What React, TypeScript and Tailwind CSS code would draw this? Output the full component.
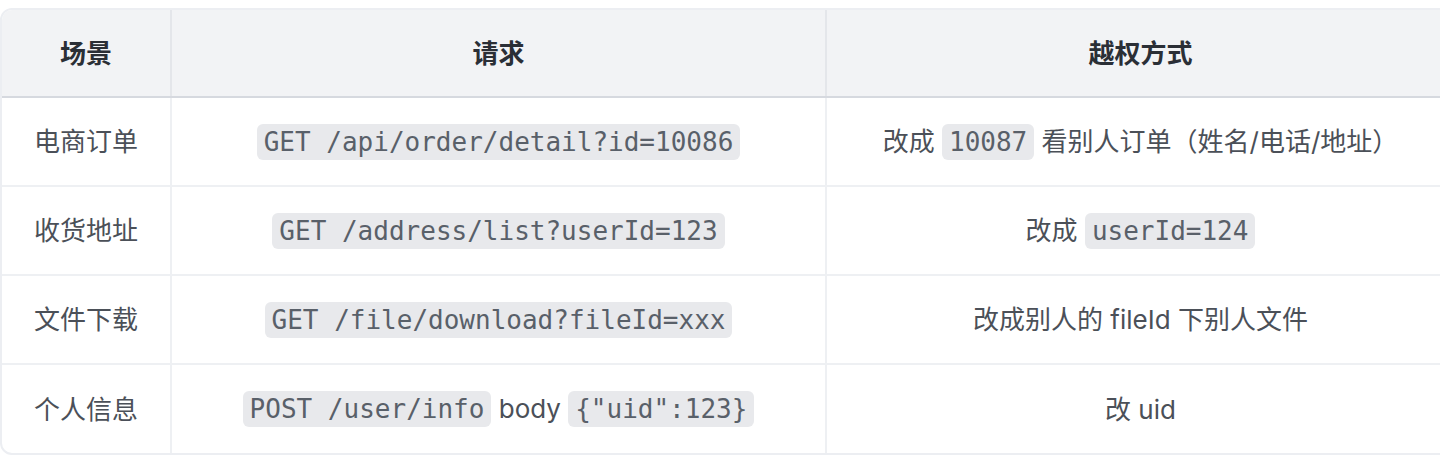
const rows: { scene: string; request: React.ReactNode; method: React.ReactNode }[] = [
  {
    scene: '电商订单',
    request: <Code>GET /api/order/detail?id=10086</Code>,
    method: (
      <>
        改成 <Code>10087</Code> 看别人订单（姓名/电话/地址）
      </>
    ),
  },
  {
    scene: '收货地址',
    request: <Code>GET /address/list?userId=123</Code>,
    method: (
      <>
        改成 <Code>userId=124</Code>
      </>
    ),
  },
  {
    scene: '文件下载',
    request: <Code>GET /file/download?fileId=xxx</Code>,
    method: <>改成别人的 fileId 下别人文件</>,
  },
  {
    scene: '个人信息',
    request: (
      <>
        <Code>POST /user/info</Code> body <Code>{'{"uid":123}'}</Code>
      </>
    ),
    method: <>改 uid</>,
  },
];

function Code({ children }: { children: React.ReactNode }) {
  return (
    <code className="rounded-md bg-[#e8e9ec] px-[7px] py-[3px] font-['DejaVu_Sans_Mono','Liberation_Mono',monospace] text-[26px] text-[#596069]">
      {children}
    </code>
  );
}

export default function App() {
  return (
    <div className="h-[462px] w-[1440px] overflow-hidden bg-white pt-2 font-['Inter','Noto_Sans_CJK_SC',sans-serif]">
      <div className="w-[1456px] overflow-hidden rounded-xl border-2 border-[#eceef2]">
        <table className="w-full border-collapse text-[26px] text-[#4b5058]">
          <thead>
            <tr className="h-[87px] bg-[#f2f3f5]">
              <th className="w-[169px] border-b-2 border-[#d6d9df] font-bold text-[#2b2f36]">场景</th>
              <th className="w-[655px] border-b-2 border-l-2 border-[#d6d9df] border-l-[#e4e6ea] font-bold text-[#2b2f36]">
                请求
              </th>
              <th className="border-b-2 border-l-2 border-[#d6d9df] border-l-[#e4e6ea] font-bold text-[#2b2f36]">
                越权方式
              </th>
            </tr>
          </thead>
          <tbody>
            {rows.map((row, idx) => (
              <tr key={row.scene} className={`h-[89px] ${idx > 0 ? 'border-t-2 border-[#eef0f3]' : ''}`}>
                <td className="text-center">{row.scene}</td>
                <td className="border-l-2 border-[#eef0f3] text-center">{row.request}</td>
                <td className="border-l-2 border-[#eef0f3] text-center">{row.method}</td>
              </tr>
            ))}
          </tbody>
        </table>
      </div>
    </div>
  );
}
